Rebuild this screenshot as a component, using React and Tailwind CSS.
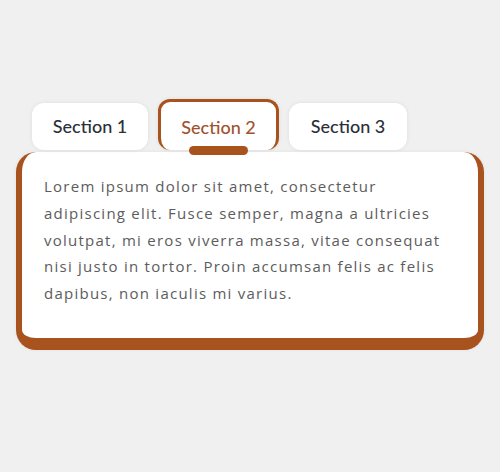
export default function App() {
  const lines = [
    "Lorem ipsum dolor sit amet, consectetur",
    "adipiscing elit. Fusce semper, magna a ultricies",
    "volutpat, mi eros viverra massa, vitae consequat",
    "nisi justo in tortor. Proin accumsan felis ac felis",
    "dapibus, non iaculis mi varius.",
  ];
  return (
    <div className="min-h-[472px] w-[500px] bg-[#f0f0f0] pt-[99px]" style={{ fontFamily: "Lato, 'Noto Sans', sans-serif" }}>
      <div className="ml-[16px] w-[468px]">
        <div className="flex items-end gap-[10px] pl-[16px]">
          <div className="flex h-[47px] w-[116px] items-center justify-center rounded-[12px] bg-white text-[18px] font-medium text-[#2b2f38] shadow-[0_0_4px_rgba(0,0,0,0.08)]">
            Section 1
          </div>
          <div className="relative flex h-[51px] w-[121px] items-center justify-center rounded-[12px] border-x-[3px] border-t-[3px] border-b-0 border-[#a8521e] bg-white pt-[1px] text-[18px] font-medium text-[#a0522d] shadow-[0_0_4px_rgba(0,0,0,0.08)]">
            <span className="mt-[1px]">Section 2</span>
            <div className="absolute -bottom-[5px] left-[28px] z-10 h-[9px] w-[59px] rounded-full bg-[#a8521e]" />
          </div>
          <div className="flex h-[47px] w-[118px] items-center justify-center rounded-[12px] bg-white text-[18px] font-medium text-[#2b2f38] shadow-[0_0_4px_rgba(0,0,0,0.08)]">
            Section 3
          </div>
        </div>
        <div className="mt-[2px] rounded-[20px] border-x-[6px] border-b-[12px] border-t-0 border-[#a8521e] bg-white px-[22px] pt-[21px] pb-[31px] shadow-[0_0_4px_rgba(0,0,0,0.06)]">
          <p className="text-[15px] leading-[26.75px] tracking-[1.25px] text-[#5c5c5c]" style={{ fontFamily: "'Open Sans', sans-serif" }}>
            {lines.map((l) => (
              <span key={l} className="block whitespace-nowrap">{l}</span>
            ))}
          </p>
        </div>
      </div>
    </div>
  );
}
